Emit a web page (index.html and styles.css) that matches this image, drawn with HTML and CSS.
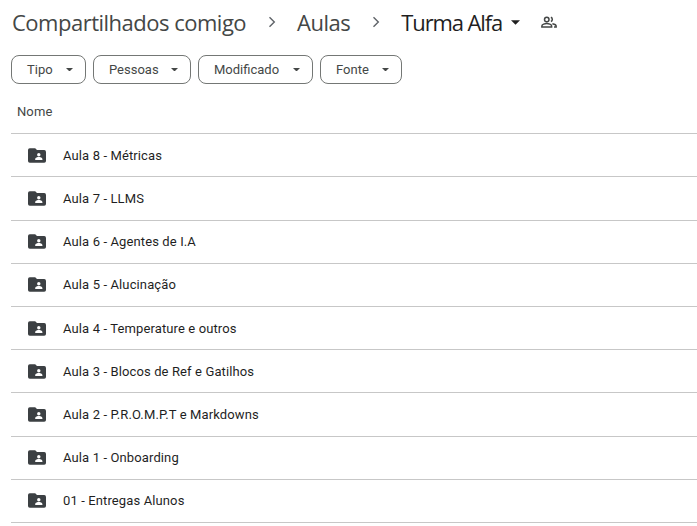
FILE: index.html
```html
<!DOCTYPE html>
<html lang="pt">
<head>
<meta charset="utf-8">
<title>Turma Alfa</title>
<link rel="stylesheet" href="styles.css">
</head>
<body>
<header class="crumbs">
  <span class="crumb">Compartilhados comigo</span>
  <svg class="chev" viewBox="0 0 8 12"><path d="M1.5 1.2 6.3 6l-4.8 4.8" fill="none" stroke="currentColor" stroke-width="1.4"/></svg>
  <span class="crumb">Aulas</span>
  <svg class="chev" viewBox="0 0 8 12"><path d="M1.5 1.2 6.3 6l-4.8 4.8" fill="none" stroke="currentColor" stroke-width="1.4"/></svg>
  <span class="crumb current">Turma Alfa</span>
  <svg class="caret-big" viewBox="0 0 10 5"><path d="M0 0h10L5 5z"/></svg>
  <svg class="people" viewBox="0 0 24 24"><path class="people-line" d="M9 5.5a3 3 0 1 0 0 6 3 3 0 0 0 0-6zM2.500 18.500v-1.200c0-2.200 4.300-3.300 6.500-3.300s6.500 1.100 6.500 3.300v1.200zM14.500 5.700a3 3 0 0 1 0 5.600M16.500 14.300c2.500.4 5 1.400 5 3v1.200h-2.800"/></svg>
</header>
<div class="filters">
  <button class="chip chip-tipo">Tipo<svg class="caret" viewBox="0 0 10 5"><path d="M0 0h10L5 5z"/></svg></button>
  <button class="chip chip-pessoas">Pessoas<svg class="caret" viewBox="0 0 10 5"><path d="M0 0h10L5 5z"/></svg></button>
  <button class="chip chip-mod">Modificado<svg class="caret" viewBox="0 0 10 5"><path d="M0 0h10L5 5z"/></svg></button>
  <button class="chip chip-fonte">Fonte<svg class="caret" viewBox="0 0 10 5"><path d="M0 0h10L5 5z"/></svg></button>
</div>
<div class="col-head">Nome</div>
<ul class="list">
  <li class="row"><svg class="folder" viewBox="0 0 20 16"><path class="fshape" fill-rule="evenodd" d="M2 0h6l2 2h8a2 2 0 0 1 2 2v10a2 2 0 0 1-2 2H2a2 2 0 0 1-2-2V2a2 2 0 0 1 2-2zM12 5.3a1.900 1.900 0 1 0 0 3.800 1.900 1.900 0 0 0 0-3.800zM8 13h8v-1.200c0-1.300-2.700-2-4-2s-4 .7-4 2z"/></svg><span>Aula 8 - Métricas</span></li>
  <li class="row"><svg class="folder" viewBox="0 0 20 16"><path class="fshape" fill-rule="evenodd" d="M2 0h6l2 2h8a2 2 0 0 1 2 2v10a2 2 0 0 1-2 2H2a2 2 0 0 1-2-2V2a2 2 0 0 1 2-2zM12 5.3a1.900 1.900 0 1 0 0 3.800 1.900 1.900 0 0 0 0-3.800zM8 13h8v-1.200c0-1.300-2.700-2-4-2s-4 .7-4 2z"/></svg><span>Aula 7 - LLMS</span></li>
  <li class="row"><svg class="folder" viewBox="0 0 20 16"><path class="fshape" fill-rule="evenodd" d="M2 0h6l2 2h8a2 2 0 0 1 2 2v10a2 2 0 0 1-2 2H2a2 2 0 0 1-2-2V2a2 2 0 0 1 2-2zM12 5.3a1.900 1.900 0 1 0 0 3.800 1.900 1.900 0 0 0 0-3.800zM8 13h8v-1.200c0-1.300-2.700-2-4-2s-4 .7-4 2z"/></svg><span>Aula 6 - Agentes de I.A</span></li>
  <li class="row"><svg class="folder" viewBox="0 0 20 16"><path class="fshape" fill-rule="evenodd" d="M2 0h6l2 2h8a2 2 0 0 1 2 2v10a2 2 0 0 1-2 2H2a2 2 0 0 1-2-2V2a2 2 0 0 1 2-2zM12 5.3a1.900 1.900 0 1 0 0 3.800 1.900 1.900 0 0 0 0-3.800zM8 13h8v-1.200c0-1.300-2.700-2-4-2s-4 .7-4 2z"/></svg><span>Aula 5 - Alucinação</span></li>
  <li class="row"><svg class="folder" viewBox="0 0 20 16"><path class="fshape" fill-rule="evenodd" d="M2 0h6l2 2h8a2 2 0 0 1 2 2v10a2 2 0 0 1-2 2H2a2 2 0 0 1-2-2V2a2 2 0 0 1 2-2zM12 5.3a1.900 1.900 0 1 0 0 3.800 1.900 1.900 0 0 0 0-3.800zM8 13h8v-1.200c0-1.300-2.700-2-4-2s-4 .7-4 2z"/></svg><span>Aula 4 - Temperature e outros</span></li>
  <li class="row"><svg class="folder" viewBox="0 0 20 16"><path class="fshape" fill-rule="evenodd" d="M2 0h6l2 2h8a2 2 0 0 1 2 2v10a2 2 0 0 1-2 2H2a2 2 0 0 1-2-2V2a2 2 0 0 1 2-2zM12 5.3a1.900 1.900 0 1 0 0 3.800 1.900 1.900 0 0 0 0-3.800zM8 13h8v-1.200c0-1.300-2.700-2-4-2s-4 .7-4 2z"/></svg><span>Aula 3 - Blocos de Ref e Gatilhos</span></li>
  <li class="row"><svg class="folder" viewBox="0 0 20 16"><path class="fshape" fill-rule="evenodd" d="M2 0h6l2 2h8a2 2 0 0 1 2 2v10a2 2 0 0 1-2 2H2a2 2 0 0 1-2-2V2a2 2 0 0 1 2-2zM12 5.3a1.900 1.900 0 1 0 0 3.800 1.900 1.900 0 0 0 0-3.800zM8 13h8v-1.200c0-1.300-2.700-2-4-2s-4 .7-4 2z"/></svg><span>Aula 2 - P.R.O.M.P.T e Markdowns</span></li>
  <li class="row"><svg class="folder" viewBox="0 0 20 16"><path class="fshape" fill-rule="evenodd" d="M2 0h6l2 2h8a2 2 0 0 1 2 2v10a2 2 0 0 1-2 2H2a2 2 0 0 1-2-2V2a2 2 0 0 1 2-2zM12 5.3a1.900 1.900 0 1 0 0 3.800 1.900 1.900 0 0 0 0-3.800zM8 13h8v-1.200c0-1.300-2.700-2-4-2s-4 .7-4 2z"/></svg><span>Aula 1 - Onboarding</span></li>
  <li class="row"><svg class="folder" viewBox="0 0 20 16"><path class="fshape" fill-rule="evenodd" d="M2 0h6l2 2h8a2 2 0 0 1 2 2v10a2 2 0 0 1-2 2H2a2 2 0 0 1-2-2V2a2 2 0 0 1 2-2zM12 5.3a1.900 1.900 0 1 0 0 3.800 1.900 1.900 0 0 0 0-3.800zM8 13h8v-1.200c0-1.300-2.700-2-4-2s-4 .7-4 2z"/></svg><span>01 - Entregas Alunos</span></li>
</ul>
</body>
</html>
```
FILE: styles.css
```css
* { box-sizing: border-box; }
html, body { margin: 0; padding: 0; height: 100%; overflow: hidden; background: #fff; }
body { font-family: Roboto, "Noto Sans", "Liberation Sans", sans-serif; color: #1f1f1f; }
.crumbs { display: flex; align-items: center; height: 47px; padding: 0 0 3px 12px; }
.crumb { font-family: "Open Sans", Roboto, sans-serif; font-size: 22px; color: #444746; letter-spacing: -0.5px; line-height: 30px; }
.crumb.current { color: #1f1f1f; letter-spacing: -1.1px; }
.chev { width: 8px; height: 12px; margin: 0 21.5px; color: #5f6368; }
.caret-big { width: 9px; height: 5px; margin-left: 9px; fill: #1f1f1f; }
.people { width: 18px; height: 18px; margin-left: 20px; }
.people-line { fill: none; stroke: #444746; stroke-width: 2; }
.filters { display: flex; gap: 7px; padding: 8px 0 0 11px; }
.chip { display: flex; align-items: center; justify-content: space-between; height: 29px; padding: 0 12.5px 0 15px; border: 1px solid #747775; border-radius: 8px; background: #fff; font: 400 13px Roboto, sans-serif; color: #444746; letter-spacing: 0; }
.chip-tipo { width: 75px; }
.chip-pessoas { width: 98px; }
.chip-mod { width: 115px; }
.chip-fonte { width: 82px; }
.caret { width: 7px; height: 3.5px; fill: #444746; }
.col-head { height: 49.2px; padding: 19px 0 0 17px; font-size: 13px; font-weight: 400; color: #444746; line-height: 18px; letter-spacing: 0.1px; }
.list { list-style: none; margin: 0 0 0 11px; padding: 0; border-top: 1px solid #c7c7c7; }
.row { display: flex; align-items: center; height: 43.2px; padding-left: 17px; border-bottom: 1px solid #c7c7c7; font-size: 13px; font-weight: 400; color: #1f1f1f; letter-spacing: 0.12px; }
.folder { width: 18px; height: 15px; margin-right: 17px; }
.fshape { fill: #3c4043; }
```
